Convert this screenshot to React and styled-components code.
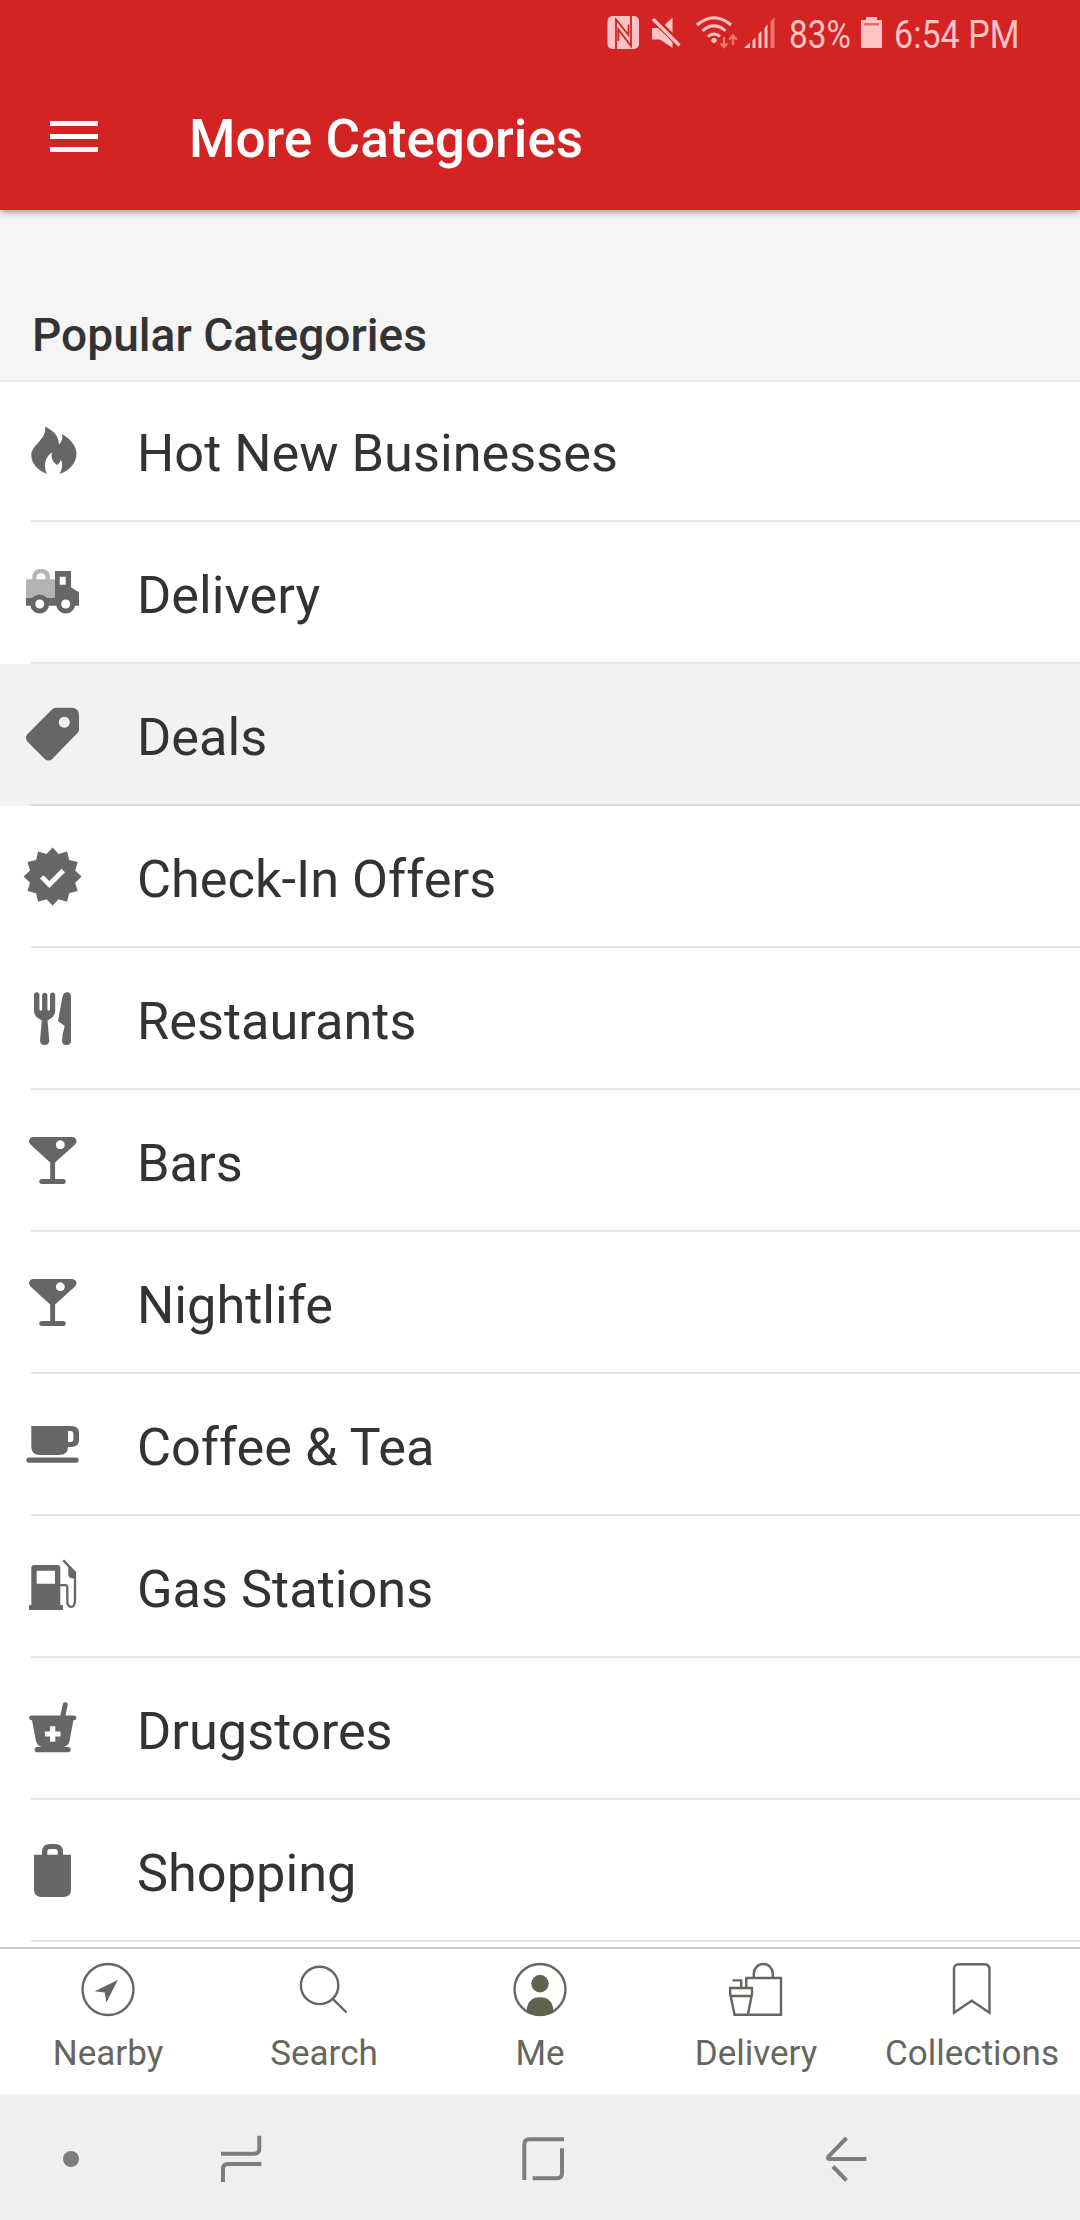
import React from 'react'
import styled, { createGlobalStyle } from 'styled-components'

const colors = {
  primary: '#d32323',
  status: '#ffc3c3',
  statusDim: '#ec7272',
  text: '#333333',
  icon: '#666666',
  iconLight: '#b3b3b3',
  tab: '#666660',
  tabDark: '#62634f',
  system: '#7d7d7d',
  line: '#e6e6e6',
}

const GlobalStyle = createGlobalStyle`
  * {
    box-sizing: border-box;
  }
  body {
    margin: 0;
    background: #fff;
    font-family: Roboto, "Liberation Sans", sans-serif;
  }
  svg {
    display: block;
    flex: none;
  }
`

const Screen = styled.div`
  display: flex;
  flex-direction: column;
  width: 1080px;
  height: 2220px;
  overflow: hidden;
`

const TopBar = styled.header`
  position: relative;
  z-index: 1;
  flex: none;
  height: 210px;
  background: ${colors.primary};
  box-shadow: 0 2px 7px rgba(0, 0, 0, 0.4);
`

const StatusBar = styled.div`
  display: flex;
  align-items: flex-start;
  height: 66px;
  padding: 16px 0 0 607px;
  color: ${colors.status};
`

const StatusIcon = styled.svg`
  width: ${props => props.$w}px;
  height: 34px;
  margin-right: ${props => props.$gap}px;
`

const StatusText = styled.span`
  width: ${props => props.$w}px;
  margin-right: ${props => props.$gap || 0}px;
  font-size: 38.5px;
  line-height: 38px;
  white-space: nowrap;
  transform: scaleX(${props => props.$squeeze});
  transform-origin: left;
`

const Toolbar = styled.div`
  display: flex;
  align-items: center;
  height: 144px;
  padding: 0 50px;
`

const MenuButton = styled.button`
  display: flex;
  flex-direction: column;
  gap: 8px;
  width: 48px;
  margin: 0 91px 4px 0;
  padding: 0;
  border: 0;
  background: none;
`

const MenuLine = styled.span`
  height: 5px;
  background: #fff;
`

const Title = styled.h1`
  margin: 2px 0 0;
  color: #fff;
  font-size: 53.1px;
  font-weight: 500;
  line-height: 60px;
`

const SectionTitle = styled.h2`
  flex: none;
  height: 172px;
  margin: 0;
  padding: 98px 32px 0;
  border-bottom: 2px solid ${colors.line};
  background: #f5f5f5;
  color: ${colors.text};
  font-size: 46.1px;
  font-weight: 500;
  line-height: 54px;
`

const List = styled.ul`
  flex: 1;
  margin: 0;
  padding: 0;
  list-style: none;
`

const Row = styled.li`
  display: flex;
  align-items: flex-end;
  height: 142px;
  padding-left: 20px;
  background: ${props => (props.$active ? '#f2f2f2' : 'transparent')};

  &:first-child {
    height: 140px;
  }
`

const RowIcon = styled.svg`
  width: 64px;
  height: 64px;
  margin-bottom: 40px;
  fill: ${colors.icon};
`

/* the divider starts under the icon, so the label reaches back below it */
const RowLabel = styled.span`
  flex: 1;
  height: 140px;
  margin-left: -53px;
  padding: 41px 0 0 106px;
  border-bottom: 2px solid ${props => (props.$active ? '#d9d9d9' : colors.line)};
  color: ${colors.text};
  font-size: 52.3px;
  line-height: 60px;
`

const TabBar = styled.nav`
  display: grid;
  grid-template-columns: repeat(5, 1fr);
  flex: none;
  height: 147px;
  border-top: 2px solid #cccccc;
  background: #fff;
`

const Tab = styled.a`
  display: flex;
  flex-direction: column;
  align-items: center;
  padding-top: 13px;
  color: ${colors.tab};
`

const TabIcon = styled.svg`
  width: 56px;
  height: 56px;
  fill: none;
  stroke: currentColor;
  stroke-width: 2.4;
`

const TabLabel = styled.span`
  margin-top: 16px;
  font-size: 35px;
  line-height: 40px;
`

const SystemBar = styled.div`
  display: grid;
  grid-template-columns: 142px 198px 406px 202px;
  justify-items: center;
  flex: none;
  height: 126px;
  padding-top: 41px;
  background: #efefef;
`

const SystemIcon = styled.svg`
  width: 48px;
  height: 48px;
  fill: none;
  stroke: ${colors.system};
  stroke-width: 4;
`

const badgePoints = Array.from({ length: 24 }, (_, i) => {
  const r = i % 2 ? 23.4 : 29
  const a = (i * Math.PI) / 12
  return `${(32.6 + r * Math.sin(a)).toFixed(2)},${(32.6 - r * Math.cos(a)).toFixed(2)}`
}).join(' ')

const Flame = () => (
  <path d="M25 8.5C32 12 39 17 39 26.5C42 24 43 20 42 16C49 20 56.5 27 56.5 36C56.5 45 49 53 39.3 56C42 52 43.5 46 40.7 41.5C40.5 44 39 46 36.8 47C32 43 31 39 32 34.5C26 38 22.5 47 27 56C17 52 11.3 45 11.3 37C11.3 27 27.5 21 25 8.5Z" />
)

const Truck = () => (
  <>
    <path
      fill={colors.iconLight}
      fillRule="evenodd"
      d="M6 19.3H12.3V17.5Q12.3 9 21.2 9T30 17.5V19.3H35V38H6ZM16.5 19.3H25.5V17.5Q25.5 13.3 21 13.3T16.5 17.5Z"
    />
    <path
      fillRule="evenodd"
      d="M35 11H51V27.3L59 32.3V45.7H6V38H35ZM39.7 16.7V24.7H45.7V16.7Z"
    />
    <circle cx="19.7" cy="44" r="9.5" />
    <circle cx="45.7" cy="44" r="9.5" />
    <circle cx="19.7" cy="44" r="4.5" fill="#fff" />
    <circle cx="45.7" cy="44" r="4.5" fill="#fff" />
  </>
)

const Tag = () => (
  <path
    fillRule="evenodd"
    d="M36 5.7H52a7 7 0 0 1 7 7V27.5q0 2-1.5 3.5L32.2 57q-3.7 3.2-7.4 0L7.3 39.5q-2.7-3.7 0-7.2L32 7.5q1.8-1.8 4-1.8ZM44.3 14.8a5.5 5.5 0 1 0 .01 0Z"
  />
)

const Badge = () => (
  <>
    <polygon points={badgePoints} />
    <path d="M21.7 32.9L29.3 40.5L43.3 26.5" fill="none" stroke="#fff" strokeWidth="4.8" />
  </>
)

const Cutlery = () => (
  <>
    <path d="M14 9a2.7 2.7 0 0 1 5.4 0V23q0 1.7 1.4 1.7T22.1 23V9a2.7 2.7 0 0 1 5.3 0V23q0 1.7 1.3 1.7T30 23V9a2.6 2.6 0 0 1 5.2 0V24.5Q35.2 31 27.5 34.5L29.3 54.5Q29 59 24.7 59T20 54.5L21.8 34.5Q14 31 14 24.5Z" />
    <path d="M42.3 11.5Q43.5 6.2 47 6.2Q51 6.2 51 11V54.5Q51 59 46.5 59T42 54.5Q42.3 48 44.7 40L38 35Z" />
  </>
)

const Cocktail = () => (
  <>
    <path
      fillRule="evenodd"
      d="M13 9H52.3a4.2 4.2 0 0 1 3 7.2L35.1 34.6V51H30.2V34.6L10.2 16.2A4.2 4.2 0 0 1 13 9ZM40.3 12.3a4.4 4.4 0 1 0 .01 0Z"
    />
    <rect x="19.3" y="51" width="26.4" height="5" rx="2.5" />
  </>
)

const Mug = () => (
  <>
    <path
      fillRule="evenodd"
      d="M11.3 14H51Q59 14 59 21V28Q59 35 51 35H48Q48 43 39 43H20Q11.3 43 11.3 34.5ZM48 19V30H50.5Q53.4 30 53.4 27V22Q53.4 19 50.5 19Z"
    />
    <rect x="6.3" y="45.4" width="52.4" height="5.4" rx="2.7" />
  </>
)

const GasPump = () => (
  <>
    <path
      fillRule="evenodd"
      d="M14 11H37.6Q40.3 11 40.3 14V51H43V56H9V51H11.3V14Q11.3 11 14 11ZM16.7 16.7V29.7H35V16.7Z"
    />
    <path
      d="M40 31.2H45Q47.3 31.2 47.3 33.5V47Q47.3 52.8 51 52.8T55 47V18.5L43.3 6.4"
      fill="none"
      stroke={colors.icon}
      strokeWidth="2.3"
    />
    <path d="M48.3 12L56 19V24.5H52.5Q48.3 24 48.3 20Z" />
  </>
)

const Mortar = () => (
  <>
    <path d="M45.2 8.8L42.6 21" stroke={colors.icon} strokeWidth="5" strokeLinecap="round" />
    <path
      fillRule="evenodd"
      d="M11.5 19.4H54a2.4 2.4 0 0 1 0 4.9H53.4L49.6 44.5Q48.5 49.5 44 51H48.6a2.7 2.7 0 0 1 0 5.3H16.7a2.7 2.7 0 0 1 0-5.3H21.5Q17 49.5 15.8 44.5L12 24.3H11.5a2.4 2.4 0 0 1 0-4.9ZM30.1 30.2V35.4H24.9V40.6H30.1V45.8H35.3V40.6H40.5V35.4H35.3V30.2Z"
    />
  </>
)

const Bag = () => (
  <path
    fillRule="evenodd"
    d="M14 16.7H22V14Q22 5.9 30 5.9H35Q43 5.9 43 14V16.7H51V51.5Q51 58.9 43.5 58.9H21.5Q14 58.9 14 51.5ZM27.3 16.7H37.7V13.5Q37.7 11 35 11H30Q27.3 11 27.3 13.5Z"
  />
)

const categories = [
  { name: 'Hot New Businesses', Icon: Flame },
  { name: 'Delivery', Icon: Truck },
  { name: 'Deals', Icon: Tag, active: true },
  { name: 'Check-In Offers', Icon: Badge },
  { name: 'Restaurants', Icon: Cutlery },
  { name: 'Bars', Icon: Cocktail },
  { name: 'Nightlife', Icon: Cocktail },
  { name: 'Coffee & Tea', Icon: Mug },
  { name: 'Gas Stations', Icon: GasPump },
  { name: 'Drugstores', Icon: Mortar },
  { name: 'Shopping', Icon: Bag },
]

const Nearby = () => (
  <>
    <circle cx="28" cy="27.5" r="25.5" />
    <path d="M37.8 18L14.7 29.3L24.7 30.5L26.4 40.5Z" fill="currentColor" stroke="none" />
  </>
)

const Search = () => (
  <>
    <circle cx="23.6" cy="23.4" r="18.7" />
    <path d="M36.8 36.8L50.5 50.5" />
  </>
)

const Me = () => (
  <>
    <circle cx="28" cy="27.5" r="25.5" />
    <g fill={colors.tabDark} stroke="none">
      <circle cx="28" cy="21.6" r="8.8" />
      <path d="M14.5 49Q15.5 35.3 28 35.3T41.5 49Q35.5 53.8 28 53.8T14.5 49Z" />
    </g>
  </>
)

const DeliveryBag = () => (
  <>
    <path d="M18.3 25.5V16H53V52.7H6.6L2.2 32V26H24V32L19.8 52.7M2.2 34H24" />
    <path d="M25.8 16V11.5a9.5 9.5 0 0 1 19 0V16M4.5 18.4H13.2V26" />
  </>
)

const Bookmark = () => <path d="M10 50.8V7.5Q10 2.2 15.3 2.2H40.2Q45.5 2.2 45.5 7.5V50.8L27.7 38.8Z" />

const tabs = [
  { name: 'Nearby', Icon: Nearby },
  { name: 'Search', Icon: Search },
  { name: 'Me', Icon: Me },
  { name: 'Delivery', Icon: DeliveryBag },
  { name: 'Collections', Icon: Bookmark },
]

const Status = () => (
  <StatusBar>
    <StatusIcon $w={32} $gap={12} viewBox="0 0 32 34" fill={colors.status}>
      <rect x="0.5" width="31.5" height="33" rx="5" />
      <path
        d="M9 33V3.5L21.5 19V8.5M24 0V30L11.3 13.5V25"
        fill="none"
        stroke={colors.primary}
        strokeWidth="1.8"
      />
    </StatusIcon>
    <StatusIcon $w={30} $gap={15} viewBox="0 0 30 34" fill={colors.status}>
      <path d="M21.5 1.5V18L13 9.5Z" />
      <path d="M2.5 2.5L28.5 29" stroke={colors.primary} strokeWidth="7" />
      <path d="M2 3L28.5 29.5" stroke={colors.status} strokeWidth="3.2" />
      <path d="M1 12H7L21.5 26V32L9 23.5H1Z" />
    </StatusIcon>
    <StatusIcon $w={42} $gap={6} viewBox="0 0 42 34" fill="none" stroke={colors.status} strokeWidth="3">
      <path d="M1 9Q18 -5.5 35 9M6.5 14.8Q18 5 29.5 14.8M12 20.5Q18 15.5 24 20.5" />
      <circle cx="18" cy="24.3" r="2.6" fill={colors.status} stroke="none" />
      <g stroke={colors.statusDim} strokeWidth="2.4">
        <path d="M28 21V31M24.5 27.5L28 31L31.5 27.5M37 29V19.5M33.2 23.5L37 19.5L40.8 23.5" />
      </g>
    </StatusIcon>
    <StatusIcon $w={31} $gap={14} viewBox="0 0 31 34" fill={colors.status}>
      <path d="M0 32L6 26.5V32ZM8.5 24.5L11.5 21.5V32H8.5ZM14.5 18L17.5 15V32H14.5ZM20.5 12L23.5 8.5V32H20.5Z" />
      <path d="M26.5 5.5L30.5 1V32H26.5Z" fill={colors.statusDim} />
    </StatusIcon>
    <StatusText $w={59} $gap={13} $squeeze={0.865}>83%</StatusText>
    <StatusIcon $w={21} $gap={12} viewBox="0 0 21 34" fill={colors.status}>
      <path d="M5 1H16V4H21V32H0V4H5Z" />
      <path d="M3 8.3H18" stroke="#dc6a6a" strokeWidth="2.4" />
    </StatusIcon>
    <StatusText $w={124} $squeeze={0.885}>6:54 PM</StatusText>
  </StatusBar>
)

const Category = ({ name, Icon, active }) => (
  <Row $active={active}>
    <RowIcon viewBox="0 0 64 64">
      <Icon />
    </RowIcon>
    <RowLabel $active={active}>{name}</RowLabel>
  </Row>
)

const App = () => (
  <>
    <GlobalStyle />
    <Screen>
      <TopBar>
        <Status />
        <Toolbar>
          <MenuButton aria-label="Menu">
            <MenuLine />
            <MenuLine />
            <MenuLine />
          </MenuButton>
          <Title>More Categories</Title>
        </Toolbar>
      </TopBar>
      <SectionTitle>Popular Categories</SectionTitle>
      <List>
        {categories.map(category => (
          <Category key={category.name} {...category} />
        ))}
      </List>
      <TabBar>
        {tabs.map(({ name, Icon }) => (
          <Tab key={name}>
            <TabIcon viewBox="0 0 56 56">
              <Icon />
            </TabIcon>
            <TabLabel>{name}</TabLabel>
          </Tab>
        ))}
      </TabBar>
      <SystemBar>
        <SystemIcon viewBox="0 0 48 48">
          <circle cx="24" cy="24" r="8" fill={colors.system} stroke="none" />
        </SystemIcon>
        <SystemIcon viewBox="0 0 48 48">
          <path d="M4 18.7H37Q42.3 18.7 42.3 13.5V0.7M44.4 29H11Q6 29 6 34V47" />
        </SystemIcon>
        <SystemIcon viewBox="0 0 48 48">
          <path d="M5.3 45V9.5Q5.3 4.3 10.5 4.3H45M43 13.3V38Q43 43.3 38 43.3H13.7" />
        </SystemIcon>
        <SystemIcon viewBox="0 0 48 48">
          <path d="M23.5 3L5.5 21.5Q4 24 7 24H43.4M10 31.5L23.5 45.5" />
        </SystemIcon>
      </SystemBar>
    </Screen>
  </>
)

export default App
